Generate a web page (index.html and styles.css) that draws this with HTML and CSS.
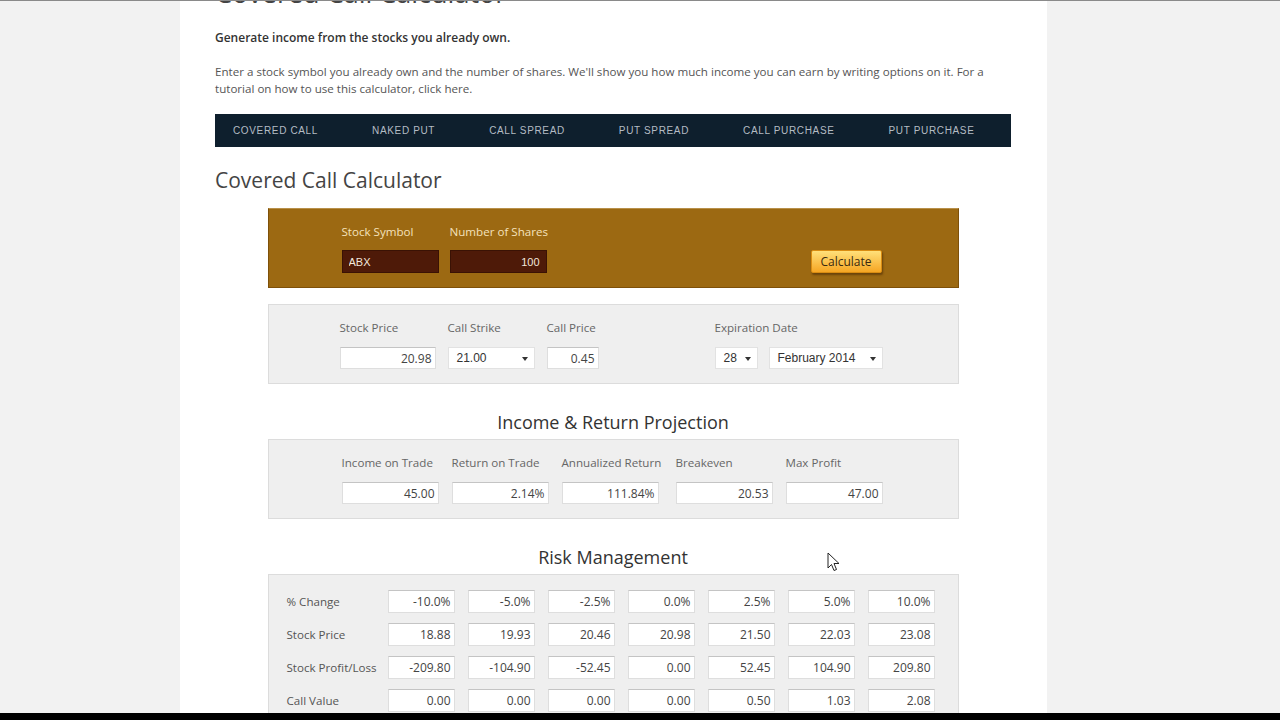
FILE: index.html
```html
<!DOCTYPE html>
<html lang="en">
<head>
    <meta charset="UTF-8">
    <meta name="viewport" content="width=device-width, initial-scale=1.0">
    <title>Covered Call Calculator</title>
    <link rel="stylesheet" href="styles.css">
</head>

<body>
    <div class="page">
        <h1 class="page-title">Covered Call Calculator</h1>
        <p class="lead">Generate income from the stocks you already own.</p>
        <p class="intro">Enter a stock symbol you already own and the number of shares. We'll show you how much income you can earn by writing options on it. For a tutorial on how to use this calculator, click here.</p>

        <nav class="tabs">
            <a href="#">Covered Call</a>
            <a href="#">Naked Put</a>
            <a href="#">Call Spread</a>
            <a href="#">Put Spread</a>
            <a href="#">Call Purchase</a>
            <a href="#">Put Purchase</a>
        </nav>

        <h2 class="calc-title">Covered Call Calculator</h2>

        <div class="calc">
            <!-- symbol + shares -->
            <div class="panel panel-brown">
                <div class="field">
                    <label>Stock Symbol</label>
                    <input class="dark-input" type="text" value="ABX" readonly>
                </div>
                <div class="field">
                    <label>Number of Shares</label>
                    <input class="dark-input num" type="text" value="100" readonly>
                </div>
                <button class="calc-button" id="calcButton">Calculate</button>
            </div>

            <!-- option details -->
            <div class="panel panel-gray options">
                <div class="field w-stock">
                    <label>Stock Price</label>
                    <input class="box num" type="text" value="20.98" readonly>
                </div>
                <div class="field w-strike">
                    <label>Call Strike</label>
                    <div class="select">21.00<span class="caret"></span></div>
                </div>
                <div class="field w-callprice">
                    <label>Call Price</label>
                    <input class="box num" type="text" value="0.45" readonly>
                </div>
                <div class="field expiry">
                    <label>Expiration Date</label>
                    <div class="selects">
                        <div class="select day">28<span class="caret"></span></div>
                        <div class="select month">February 2014<span class="caret"></span></div>
                    </div>
                </div>
            </div>

            <h3 class="section-title">Income &amp; Return Projection</h3>
            <div class="panel panel-gray projection">
                <div class="field">
                    <label>Income on Trade</label>
                    <input class="box num" type="text" value="45.00" readonly>
                </div>
                <div class="field">
                    <label>Return on Trade</label>
                    <input class="box num" type="text" value="2.14%" readonly>
                </div>
                <div class="field">
                    <label>Annualized Return</label>
                    <input class="box num" type="text" value="111.84%" readonly>
                </div>
                <div class="field">
                    <label>Breakeven</label>
                    <input class="box num" type="text" value="20.53" readonly>
                </div>
                <div class="field">
                    <label>Max Profit</label>
                    <input class="box num" type="text" value="47.00" readonly>
                </div>
            </div>

            <h3 class="section-title">Risk Management</h3>
            <div class="panel panel-gray risk" id="riskTable"></div>
        </div>
    </div>

    <div class="bottom-bar"></div>

    <svg class="cursor" width="13" height="20" viewBox="0 0 13 20">
        <path d="M1 1 L1 16 L4.5 12.5 L7 18.5 L9.5 17.5 L7 11.5 L12 11.5 Z" fill="#fff" stroke="#222" stroke-width="1"/>
    </svg>

    <script>
        // Risk management rows
        let rows = [
            ["% Change", ["-10.0%", "-5.0%", "-2.5%", "0.0%", "2.5%", "5.0%", "10.0%"]],
            ["Stock Price", ["18.88", "19.93", "20.46", "20.98", "21.50", "22.03", "23.08"]],
            ["Stock Profit/Loss", ["-209.80", "-104.90", "-52.45", "0.00", "52.45", "104.90", "209.80"]],
            ["Call Value", ["0.00", "0.00", "0.00", "0.00", "0.50", "1.03", "2.08"]]
        ];

        let table = document.getElementById("riskTable");
        rows.forEach(function (row) {
            let line = document.createElement("div");
            line.classList.add("risk-row");

            let label = document.createElement("span");
            label.classList.add("risk-label");
            label.textContent = row[0];
            line.appendChild(label);

            row[1].forEach(function (value) {
                let cell = document.createElement("input");
                cell.type = "text";
                cell.readOnly = true;
                cell.value = value;
                cell.classList.add("box", "num", "risk-cell");
                line.appendChild(cell);
            });

            table.appendChild(line);
        });
    </script>
</body>

</html>
```

FILE: styles.css
```css
body {
    font-family: "Open Sans", Arial, sans-serif;
    background-color: #f2f2f2;
    margin: 0;
    padding: 0;
    height: 720px;
    overflow: hidden;
    border-top: 1px solid #8a8a8a;
    box-sizing: border-box;
    position: relative;
}

.page {
    width: 867px;
    margin-left: 180px;
    padding: 0 36px 0 35px;
    box-sizing: border-box;
    background-color: #fff;
    height: 712px;
    overflow: hidden;
}

.page-title {
    font-family: "Open Sans", sans-serif;
    font-weight: 400;
    font-size: 27px;
    line-height: 30px;
    color: #444;
    margin: -23px 0 0;
}

.lead {
    font-size: 12px;
    font-weight: 600;
    color: #333;
    margin: 21px 0 0;
    line-height: 17px;
}

.intro {
    font-size: 11.6px;
    color: #555;
    line-height: 17px;
    margin: 17px 0 0;
}

.tabs {
    display: flex;
    gap: 54px;
    height: 33px;
    align-items: center;
    padding-left: 18px;
    margin-top: 17px;
    background-color: #0e1f2d;
}

.tabs a {
    font-family: Arial, "Liberation Sans", sans-serif;
    font-size: 10px;
    letter-spacing: 0.65px;
    text-transform: uppercase;
    text-decoration: none;
    color: #b4bcc4;
}

.calc-title {
    font-family: "Open Sans", sans-serif;
    font-weight: 400;
    font-size: 21px;
    line-height: 26px;
    color: #444;
    margin: 20px 0 0;
}

.calc {
    width: 691px;
    margin: 15px auto 0;
}

.panel {
    display: flex;
    box-sizing: border-box;
}

.field {
    display: flex;
    flex-direction: column;
}

.field label {
    font-size: 11.6px;
    line-height: 16px;
    margin-bottom: 11px;
    white-space: nowrap;
}

.panel-brown {
    height: 80px;
    padding: 15px 76px 0 73px;
    background-color: #9c6912;
    border: 1px solid #7e5009;
    border-top-color: #b8904a;
    gap: 11px;
    margin-bottom: 16px;
}

.panel-brown label {
    color: #f4e2bc;
    margin-bottom: 10px;
}

.dark-input {
    width: 97px;
    height: 23px;
    box-sizing: border-box;
    padding: 0 6px;
    font-family: Arial, "Liberation Sans", sans-serif;
    font-size: 11px;
    color: #f2e6dc;
    background-color: #4e1a08;
    border: 1px solid #3a1204;
    outline: none;
}

.num {
    text-align: right;
}

.calc-button {
    margin-left: auto;
    align-self: flex-start;
    margin-top: 26px;
    width: 71px;
    height: 23px;
    font-family: "Open Sans", sans-serif;
    font-size: 12px;
    color: #3a2a10;
    background: linear-gradient(#ffe07a, #f6a623);
    border: 1px solid #d98c12;
    border-radius: 2px;
    box-shadow: 1px 2px 2px rgba(60, 30, 0, 0.5);
    cursor: pointer;
    padding: 0;
}

.panel-gray {
    background-color: #efefef;
    border: 1px solid #dcdcdc;
}

.panel-gray label {
    color: #666;
}

.box {
    height: 22px;
    box-sizing: border-box;
    padding: 0 3px;
    font-family: "Open Sans", sans-serif;
    font-size: 12px;
    color: #444;
    background-color: #fff;
    border: 1px solid #dedede;
    border-top-color: #c4c4c4;
    outline: none;
}

.options {
    height: 80px;
    padding: 15px 0 0 71px;
}

.w-stock {
    width: 96px;
    margin-right: 12px;
}

.w-strike {
    width: 87px;
    margin-right: 12px;
}

.w-callprice {
    width: 52px;
    margin-right: 116px;
}

.w-stock .box,
.w-callprice .box {
    width: 100%;
}

.select {
    position: relative;
    height: 22px;
    box-sizing: border-box;
    padding: 0 8px;
    font-family: Arial, "Liberation Sans", sans-serif;
    font-size: 12px;
    line-height: 21px;
    color: #333;
    background-color: #fff;
    border: 1px solid #e2e2e2;
}

.caret {
    position: absolute;
    right: 6px;
    top: 9px;
    border-left: 3px solid transparent;
    border-right: 3px solid transparent;
    border-top: 4px solid #333;
}

.selects {
    display: flex;
    gap: 11px;
}

.select.day {
    width: 43px;
}

.select.month {
    width: 114px;
}

.section-title {
    font-family: "Open Sans", sans-serif;
    font-weight: 400;
    font-size: 18px;
    line-height: 24px;
    color: #333;
    text-align: center;
    margin: 26px 0 5px;
}

.projection {
    height: 80px;
    padding: 15px 0 0 73px;
}

.projection .field {
    width: 97px;
    margin-right: 13px;
}

.projection .field:nth-child(3) {
    margin-right: 17px;
}

.projection .box {
    width: 100%;
}

.risk {
    flex-direction: column;
    gap: 10px;
    padding: 15px 0 20px 18px;
}

.risk-row {
    display: flex;
    align-items: center;
    gap: 13px;
}

.risk-label {
    width: 88px;
    font-size: 11.6px;
    color: #555;
    white-space: nowrap;
}

.risk-cell {
    width: 67px;
    height: 23px;
}

.bottom-bar {
    position: absolute;
    left: 0;
    right: 0;
    bottom: 0;
    height: 7px;
    background-color: #000;
}

.cursor {
    position: absolute;
    left: 827px;
    top: 551px;
}
```
